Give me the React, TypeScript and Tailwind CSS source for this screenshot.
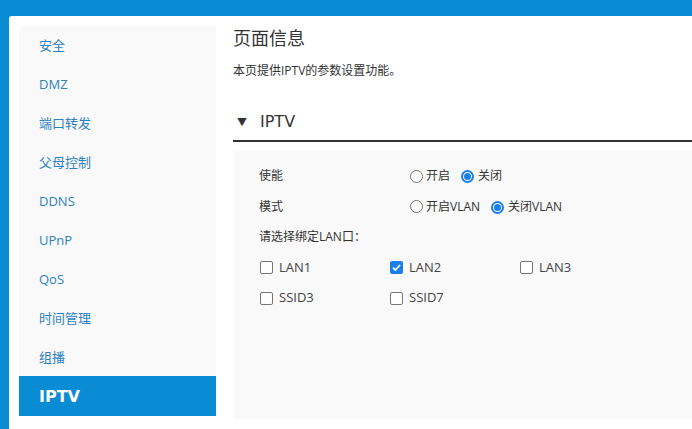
import React from "react";

const font = { fontFamily: '"Open Sans", "Noto Sans CJK SC", sans-serif' };

const items = ["安全", "DMZ", "端口转发", "父母控制", "DDNS", "UPnP", "QoS", "时间管理", "组播"];

function Radio({ checked }: { checked: boolean }) {
  return (
    <span
      className={
        "inline-flex w-[13px] h-[13px] rounded-full items-center justify-center shrink-0 " +
        (checked ? "border-2 border-[#1a7fe8] bg-white" : "border border-[#767676] bg-white")
      }
    >
      {checked && <span className="w-[7px] h-[7px] rounded-full bg-[#1a7fe8]" />}
    </span>
  );
}

function Check({ checked }: { checked: boolean }) {
  return (
    <span
      className={
        "inline-flex w-[13px] h-[13px] rounded-[2px] items-center justify-center shrink-0 " +
        (checked ? "bg-[#1a7fe8]" : "border border-[#767676] bg-white")
      }
    >
      {checked && (
        <svg width="11" height="11" viewBox="0 0 11 11">
          <path d="M2 5.6 L4.4 8 L9 3" fill="none" stroke="white" strokeWidth="1.8" />
        </svg>
      )}
    </span>
  );
}

export default function App() {
  return (
    <div
      className="w-[692px] h-[429px] bg-[#0a8cd4] pl-[9px] pt-[16px] overflow-hidden"
      style={font}
    >
      <div className="flex h-full bg-white rounded-tl-[3px]">
        <div className="mt-[10px] ml-[10px] w-[197px] h-[390px] bg-[#f9f9fa] flex flex-col shrink-0">
          {items.map((t) => (
            <div key={t} className="h-[39px] flex items-center pl-[20px] text-[13px] text-[#2b82c0]">
              {t}
            </div>
          ))}
          <div
            className="h-[40px] -mt-[1px] pt-[1px] flex items-center pl-[20px] bg-[#0a8cd4] text-white text-[16px] font-bold"
            style={{ fontFamily: '"DejaVu Sans", sans-serif' }}
          >
            IPTV
          </div>
        </div>
        <div className="ml-[17px] flex-1 flex flex-col text-[#333]">
          <div className="mt-[10px] h-[24px] leading-[24px] text-[18px] text-[#333]">页面信息</div>
          <div className="mt-[12px] h-[18px] leading-[18px] text-[12px] text-[#333]">
            本页提供IPTV的参数设置功能。
          </div>
          <div className="mt-[30px] h-[24px] flex items-center pl-[4px] text-[#333]">
            <span className="text-[10px] mr-[13px]">▼</span>
            <span className="text-[16px]" style={{ fontFamily: '"DejaVu Sans", sans-serif' }}>
              IPTV
            </span>
          </div>
          <div className="mt-[6px] h-[2px] bg-[#333]" />
          <div className="mt-[9px] ml-[1px] h-[268px] bg-[#f9f9f9] pt-[10px] pl-[25px] text-[12px] text-[#333]">
            <div className="h-[30px] flex items-center">
              <div className="w-[151px]">使能</div>
              <Radio checked={false} />
              <span className="ml-[3px]">开启</span>
              <span className="ml-[11px]">
                <Radio checked={true} />
              </span>
              <span className="ml-[4px]">关闭</span>
            </div>
            <div className="h-[31px] flex items-center">
              <div className="w-[151px]">模式</div>
              <Radio checked={false} />
              <span className="ml-[3px]">开启VLAN</span>
              <span className="ml-[11px]">
                <Radio checked={true} />
              </span>
              <span className="ml-[4px]">关闭VLAN</span>
            </div>
            <div className="h-[30px] flex items-center">请选择绑定LAN口：</div>
            <div className="h-[31px] flex items-center text-[13px] text-[#444]">
              {[
                ["LAN1", false],
                ["LAN2", true],
                ["LAN3", false],
              ].map(([l, c]) => (
                <div key={l as string} className="w-[130px] flex items-center pl-[1px]">
                  <Check checked={c as boolean} />
                  <span className="ml-[6px]">{l as string}</span>
                </div>
              ))}
            </div>
            <div className="h-[30px] flex items-center text-[13px] text-[#444]">
              {["SSID3", "SSID7"].map((l) => (
                <div key={l} className="w-[130px] flex items-center pl-[1px]">
                  <Check checked={false} />
                  <span className="ml-[6px]">{l}</span>
                </div>
              ))}
            </div>
          </div>
        </div>
      </div>
    </div>
  );
}
